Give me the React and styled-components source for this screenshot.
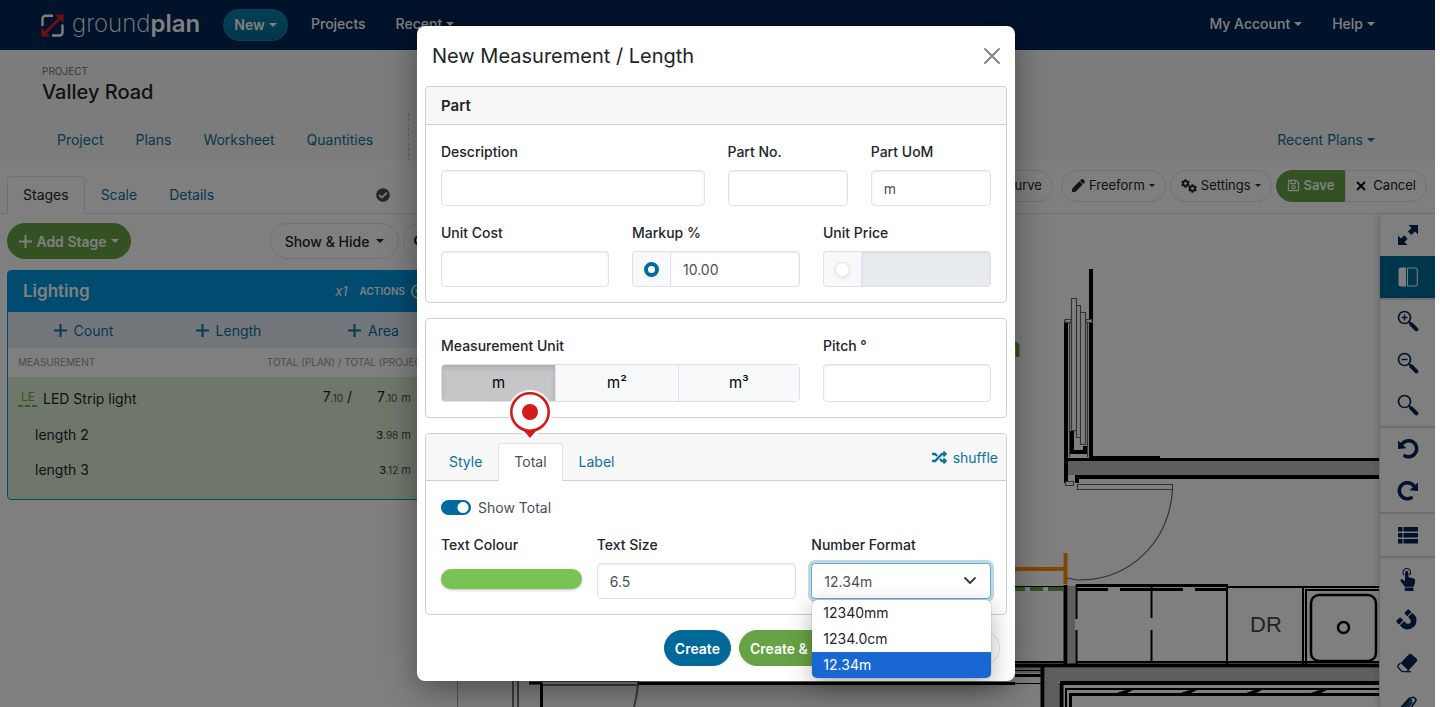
import { useState } from 'react';
import styled, { createGlobalStyle, css } from 'styled-components';
import { FaCheckCircle, FaCog, FaMagnet, FaPen, FaRandom, FaRegSave, FaSearch } from 'react-icons/fa';

const GlobalStyle = createGlobalStyle`
  * { box-sizing: border-box; }
  body {
    margin: 0;
    background: #fff;
    color: #212529;
    font-family: Inter, 'Liberation Sans', sans-serif;
    font-size: 14px;
    line-height: 21px;
  }
  button, input, select { font: inherit; color: inherit; }
  button { cursor: pointer; }
  a { text-decoration: none; }
`;

const Page = styled.div`
  position: relative;
  display: flex;
  flex-direction: column;
  height: 100vh;
  margin-right: 5px;
  overflow: hidden;
`;

const Caret = styled.span`
  display: inline-block;
  margin-left: 4px;
  vertical-align: 3px;
  border-top: 4px solid currentColor;
  border-left: 4px solid transparent;
  border-right: 4px solid transparent;
`;

/* ---- top bar ---- */

const TopBar = styled.header`
  display: flex;
  align-items: center;
  flex: none;
  height: 50px;
  padding: 0 60px 0 41px;
  background: #022456;
  color: #fff;
  font-weight: 500;
`;

const Logo = styled.a`
  display: flex;
  align-items: center;
  gap: 8px;
  width: 182px;
  color: #fff;
  font-size: 24px;
  font-weight: 200;
  line-height: 32px;
  span { padding-bottom: 2px; }
  b { font-weight: 600; }
`;

const NewButton = styled.button`
  height: 32px;
  width: 65px;
  border: 1px solid #0a86b4;
  border-radius: 16px;
  background: linear-gradient(#0c80ac, #006c96);
  color: #fff;
  font-weight: 600;
  padding: 0 0 2px;
`;

const TopLinks = styled.nav`
  display: flex;
  gap: 30px;
  margin-left: ${({ $end }) => ($end ? 'auto' : '23px')};
  padding-bottom: 3px;
  a { color: #fff; }
`;

/* ---- project bar ---- */

const ProjectBar = styled.section`
  flex: none;
  height: 111px;
  padding: 14px 60px 0 42px;
  background: #f8f8f8;
`;

const Eyebrow = styled.div`
  font-size: 10px;
  line-height: 14px;
  text-transform: uppercase;
  color: #6c757d;
`;

const ProjectName = styled.h1`
  margin: 0;
  font-size: 20px;
  line-height: 28px;
  font-weight: 500;
`;

const ProjectNav = styled.nav`
  display: flex;
  align-items: flex-end;
  height: 55px;
  a { height: 48px; padding-top: 16px; color: #0c719f; }
`;

const NavGroup = styled.div`
  display: flex;
  gap: 32px;
  padding: 0 35px 0 15px;
  border-right: 1px dashed #c8c8c8;
`;

const RecentPlans = styled.a`
  margin-left: auto;
`;

/* ---- workspace ---- */

const Workspace = styled.div`
  display: flex;
  flex: 1;
  min-height: 0;
`;

const Sidebar = styled.aside`
  flex: none;
  width: 457px;
  padding-top: 15px;
`;

const SideTabs = styled.nav`
  display: flex;
  align-items: center;
  height: 38px;
  padding: 0 67px 0 7px;
  border-bottom: 1px solid #dee2e6;
  svg { margin-left: auto; color: #495057; }
`;

const SideTab = styled.a`
  height: 38px;
  padding: 7px 15px;
  border: 1px solid transparent;
  border-radius: 4px 4px 0 0;
  color: #0c719f;
  ${({ $active }) => $active && css`
    border-color: #dee2e6 #dee2e6 #fff;
    background: #fff;
    color: #212529;
  `}
`;

const SideActions = styled.div`
  display: flex;
  align-items: center;
  gap: 4px;
  padding: 9px 10px 11px 7px;
`;

const Pill = styled.button`
  display: inline-flex;
  align-items: center;
  justify-content: center;
  gap: 4px;
  height: ${({ $small }) => ($small ? 32 : 36)}px;
  padding: 0 10px;
  border: 1px solid #dee2e6;
  border-radius: 18px;
  background: #fff;
  font-size: ${({ $small }) => ($small ? 13 : 14)}px;
  white-space: nowrap;
  ${Caret} {
    margin-left: 0;
    border-width: ${({ $small }) => ($small ? '3px 3px 0' : '4px 4px 0')};
  }
  ${({ $tone }) => $tone === 'green' && css`
    border-color: #67a244;
    background: #67a244;
    color: #fff;
    font-weight: 600;
  `}
  ${({ $tone }) => $tone === 'blue' && css`
    border-color: #00699a;
    background: #00699a;
    color: #fff;
    font-weight: 600;
  `}
  ${({ $side }) => $side === 'left' && 'border-radius: 16px 0 0 16px;'}
  ${({ $side }) => $side === 'right' && 'border-radius: 0 16px 16px 0; gap: 7px;'}
`;

const AddStage = styled(Pill)`
  width: 124px;
  margin-right: auto;
`;

const ShowHide = styled(Pill)`
  width: 129px;
  gap: 7px;
  font-weight: 500;
`;

const SearchPill = styled(Pill)`
  width: 44px;
  justify-content: flex-start;
`;

const CancelPill = styled(Pill)`
  width: 84px;
`;

const Cogs = styled.span`
  display: flex;
  width: 16px;
  height: 14px;
  svg { flex: none; }
  svg + svg { align-self: flex-end; margin-left: -2px; }
`;

const StageCard = styled.section`
  height: 230px;
  margin: 0 10px 0 7px;
  border: 1px solid #0096e0;
  border-radius: 4px;
  overflow: hidden;
  background: #deeed6;
`;

const StageHead = styled.div`
  display: flex;
  align-items: center;
  gap: 12px;
  height: 41px;
  padding: 0 20px 0 15px;
  background: #0096e0;
  color: #fff;
  h2 { margin: 0 auto 0 0; font-size: 17px; font-weight: 600; }
  i { font-size: 13px; }
  button {
    display: flex;
    align-items: center;
    gap: 6px;
    padding: 0;
    border: 0;
    background: none;
    font-size: 10px;
    font-weight: 600;
  }
`;

const AddRow = styled.div`
  display: grid;
  grid-template-columns: repeat(3, 1fr);
  height: 36px;
  padding-left: 3px;
  background: #e7eef6;
  button {
    display: flex;
    align-items: center;
    justify-content: center;
    gap: 7px;
    border: 0;
    background: none;
    color: #0c719f;
  }
`;

const MeasureTable = styled.table`
  width: 100%;
  border-collapse: collapse;
  th {
    height: 29px;
    padding: 0 14px 0 10px;
    background: #fff;
    color: #999;
    font-size: 10px;
    font-weight: 400;
    text-align: left;
    text-transform: uppercase;
  }
  th + th { text-align: right; }
  td { height: 35px; padding: 0; text-align: right; }
  td:first-child { text-align: left; padding-left: 27px; }
  td:last-child { width: 94px; padding-right: 35px; white-space: nowrap; }
  tbody tr:first-child td { height: 40px; }
  tbody tr:first-child td:first-child { padding-left: 10px; }
  small { font-size: 10px; color: #495057; }
`;

const MeasureName = styled.span`
  display: inline-flex;
  align-items: center;
  gap: 5px;
`;

const Swatch = styled.span`
  width: 20px;
  padding: 0 3px 3px;
  background: repeating-linear-gradient(90deg, #67b345 0 5px, transparent 5px 7px) bottom / 100% 2px no-repeat;
  color: #67b345;
  font-size: 12px;
  line-height: 14px;
`;

const SubValue = styled.span`
  font-size: 11px;
  span { color: #495057; }
`;

/* ---- plan area ---- */

const PlanArea = styled.main`
  display: flex;
  flex: 1;
  flex-direction: column;
  min-width: 0;
`;

const Toolbar = styled.div`
  display: flex;
  align-items: center;
  justify-content: flex-end;
  flex: none;
  gap: 4px;
  height: 53px;
  padding: 0 8px 3px;
  border-bottom: 1px solid #dee2e6;
`;

const ButtonPair = styled.div`
  display: flex;
  margin-right: ${({ $spaced }) => ($spaced ? 4 : 0)}px;
`;

const PlanBody = styled.div`
  display: flex;
  flex: 1;
  min-height: 0;
`;

const Canvas = styled.div`
  display: flex;
  justify-content: flex-end;
  flex: 1;
  min-width: 0;
  overflow: hidden;
  svg { flex: none; }
`;

const ToolColumn = styled.div`
  flex: none;
  width: 56px;
  border-left: 1px solid #d8d8d8;
  box-shadow: -2px 0 6px rgba(0, 0, 0, 0.12);
  background: #fff;
`;

const ToolGroup = styled.div`
  border-bottom: 2px solid #dcdcdc;
`;

const Tool = styled.button`
  display: flex;
  align-items: center;
  justify-content: center;
  width: 100%;
  height: 42px;
  padding: 0;
  border: 0;
  background: ${({ $active }) => ($active ? '#006c96' : 'none')};
  color: ${({ $active }) => ($active ? '#fff' : '#022456')};
`;

const TiltedMagnet = styled(FaMagnet)`
  transform: rotate(-45deg);
`;

/* ---- dialog ---- */

const Backdrop = styled.div`
  position: absolute;
  inset: 0;
  padding: 26px 19px 0 16px;
  background: rgba(0, 0, 0, 0.5);
`;

const Dialog = styled.form`
  display: flex;
  flex-direction: column;
  gap: 15px;
  max-width: 598px;
  margin: 0 auto;
  padding: 0 8px 15px;
  border-radius: 8px;
  background: #fff;
  box-shadow: 0 8px 32px rgba(0, 0, 0, 0.4);
`;

const DialogHead = styled.div`
  display: flex;
  align-items: center;
  justify-content: space-between;
  height: 60px;
  margin-bottom: -15px;
  padding: 0 7px;
  h2 { margin: 0; font-size: 20px; font-weight: 400; line-height: 30px; }
  button {
    display: flex;
    padding: 0;
    border: 0;
    background: none;
    color: #7f7f7f;
  }
`;

const Card = styled.fieldset`
  min-width: 0;
  margin: 0;
  padding: 0;
  border: 1px solid #cfcfcf;
  border-radius: 4px;
`;

const CardHead = styled.div`
  display: flex;
  padding: 8px 15px;
  border-bottom: 1px solid #cfcfcf;
  border-radius: 4px 4px 0 0;
  background: #f7f7f7;
  h3 { margin: 0; font-size: 15px; font-weight: 600; line-height: 21px; }
`;

const CardBody = styled.div`
  display: grid;
  grid-template-columns: ${({ $cols = 'repeat(12, 1fr)' }) => $cols};
  column-gap: ${({ $gap = 23 }) => $gap}px;
  row-gap: 16px;
  padding: 16px 15px 15px;
`;

const Field = styled.div`
  grid-column: span ${({ $span = 1 }) => $span};
  position: relative;
  min-width: 0;
`;

const Label = styled.label`
  display: block;
  margin-bottom: 8px;
  font-weight: 500;
`;

const boxed = css`
  width: 100%;
  height: ${({ $tall }) => ($tall ? 38 : 36)}px;
  padding: 0 12px;
  border: 1px solid #dee2e6;
  border-radius: 4px;
  background: #fff;
  box-shadow: inset 0 1px 2px rgba(0, 0, 0, 0.08);
  color: #495057;
  outline: 0;
`;

const Input = styled.input`
  ${boxed}
  &:disabled { background: #e7eaee; }
`;

const InputGroup = styled.div`
  display: flex;
  ${Input} { flex: 1; min-width: 0; border-radius: 0 4px 4px 0; }
`;

const RadioCell = styled.span`
  display: flex;
  align-items: center;
  justify-content: center;
  flex: none;
  width: 38px;
  border: 1px solid #dee2e6;
  border-right: 0;
  border-radius: 4px 0 0 4px;
  background: #f8f9fb;
  input {
    appearance: none;
    width: 15px;
    height: 15px;
    margin: 0;
    border: 1px solid #dee2e6;
    border-radius: 50%;
    background: #fff;
    box-shadow: 0 2px 4px rgba(0, 0, 0, 0.08);
  }
  input:checked { border: 4px solid #006c9d; }
`;

const UnitGroup = styled.div`
  display: grid;
  grid-template-columns: 113fr 122fr 121fr;
  height: 38px;
  border: 1px solid #dee2e6;
  border-radius: 4px;
  overflow: hidden;
`;

const UnitButton = styled.button`
  padding: 0 0 2px;
  border: 0;
  background: #f8f9fb;
  color: #000;
  font-size: 15px;
  & + & { border-left: 1px solid #dee2e6; }
  ${({ $active }) => $active && css`
    background: #c4c6c8;
    box-shadow: inset 0 3px 5px rgba(0, 0, 0, 0.13);
  `}
`;

const TabHead = styled(CardHead)`
  align-items: flex-end;
  height: 47px;
  padding: 0 8px 0 7px;
`;

const Tab = styled.button`
  position: relative;
  height: 38px;
  margin-bottom: -1px;
  padding: 0 15px 2px;
  border: 1px solid transparent;
  border-bottom: 0;
  border-radius: 4px 4px 0 0;
  background: none;
  color: #0c719f;
  ${({ $active }) => $active && css`
    border-color: #dee2e6;
    background: #fff;
    color: #495057;
  `}
`;

const Pin = styled.svg`
  position: absolute;
  left: 50%;
  bottom: 100%;
  margin: 0 0 2px -22px;
`;

const Shuffle = styled.button`
  display: flex;
  align-items: center;
  gap: 6px;
  margin: 0 0 12px auto;
  padding: 0;
  border: 0;
  background: none;
  color: #0c719f;
`;

const SwitchRow = styled.label`
  grid-column: 1 / -1;
  display: flex;
  align-items: center;
  gap: 7px;
  color: #495057;
  input {
    appearance: none;
    width: 30px;
    height: 15px;
    margin: 0;
    border-radius: 8px;
    background: radial-gradient(circle at 22px 50%, #fff 5px, #006c9d 6px);
  }
`;

const ColourButton = styled.button`
  display: block;
  width: 100%;
  height: 20px;
  margin-top: 14px;
  border: 0;
  border-radius: 10px;
  background: #79c253;
  box-shadow: 0 1px 3px rgba(0, 0, 0, 0.25);
`;

const Select = styled.select`
  ${boxed}
  appearance: none;
  border-color: #6cabc9;
  box-shadow: 0 0 0 3px #bcd9e7;
`;

const SelectChevron = styled.svg`
  position: absolute;
  right: 14px;
  bottom: 13px;
  pointer-events: none;
`;

const Options = styled.ul`
  position: absolute;
  top: 100%;
  left: 1px;
  right: 0;
  margin: 1px 0 0;
  padding: 0;
  border-radius: 5px;
  background: #fff;
  box-shadow: 0 0 1px rgba(0, 0, 0, 0.6), 0 8px 24px rgba(0, 0, 0, 0.3);
  list-style: none;
  overflow: hidden;
`;

const Option = styled.li`
  padding: 0 11px;
  line-height: 26px;
  ${({ $active }) => $active && 'background: #1967d2; color: #fff;'}
`;

const DialogFoot = styled.div`
  display: flex;
  justify-content: flex-end;
  gap: 8px;
  padding-right: 7px;
`;

const formats = ['12340mm', '1234.0cm', '12.34m'];

function Plus() {
  return (
    <svg width="13" height="13" viewBox="0 0 13 13" stroke="currentColor" strokeWidth="2">
      <path d="M6.500 0v13M0 6.500h13" />
    </svg>
  );
}

function ZoomIcon({ sign }) {
  return (
    <svg width="22" height="22" viewBox="0 0 22 22" fill="none" stroke="currentColor">
      <circle cx="7.5" cy="7.5" r="6" strokeWidth="1.7" />
      <path d="M11.6 11.6l2.4 2.4" strokeWidth="2" />
      <path d="M14.4 14.4l5 5" strokeWidth="4" strokeLinecap="round" />
      {sign && <path d="M4.5 7.5h6" strokeWidth="1.4" />}
      {sign === 'in' && <path d="M7.5 4.5v6" strokeWidth="1.4" />}
    </svg>
  );
}

function TurnIcon({ flip }) {
  return (
    <svg width="22" height="22" viewBox="0 0 22 22">
      <g transform={flip ? 'translate(22 0) scale(-1 1)' : undefined}>
        <path d="M4.5 6.600C7 2.800 12 1.600 15.800 3.800c3.900 2.300 5 7.500 2.600 11.200-2.200 3.400-6.800 4.700-10.600 2.900" fill="none" stroke="currentColor" strokeWidth="3.600" strokeLinecap="round" />
        <path d="M1 2.500v8.500l8.500-.8z" fill="currentColor" />
      </g>
    </svg>
  );
}

function FloorPlan() {
  return (
    <svg width="922" height="493" viewBox="457 214 922 493" fill="none" stroke="#000">
      <g fill="#bcbcbc" stroke="none">
        <path d="M1068 461h311v14h-311zM1068 586h7v78h-7zM1045 668h334v13h-320v26h-14zM1015 667h27v6h-27z" />
      </g>
      <text x="1021" y="357" textAnchor="end" fontSize="26" fontWeight="700" fill="#67a244" stroke="none">7.10m</text>
      {/* sliding door pocket */}
      <path strokeWidth="4" d="M1091 269V460M1066 321V483M1072 431v21h13v-6M1076 477H1379M1077 475v8" />
      <g stroke="#666" fill="#fff" strokeWidth="1.200">
        <path d="M1069.500 323v134M1087.500 323v134" />
        <path d="M1065 319.500h6v3h-6zM1086 319.500h6v3h-6zM1071.500 298.500h5v132h-5zM1076.500 305.500h4v132h-4zM1080.500 312.500h5v132h-5z" />
        <path d="M1065.500 481.500h8v4h-8zM1077.500 484.500h95v5h-95z" />
        <path fill="none" d="M1172.500 490C1169 540 1132 581 1077 580l-10-2" />
      </g>
      <path strokeWidth="3" d="M1064 459.500H1379M1091 457.500h69" />
      {/* bench and sink */}
      <path strokeWidth="4" d="M1065.500 585v79M1015 665.500H1379M1042.500 665v42M1060 683H1379M1061.500 683v24" />
      <path strokeWidth="3" d="M1076 585.500h152M1077 589.500h31M1120 589.500h63M1195 589.500h32M1015 675.500h27M1070 694.500H1379M1070.500 693v14" />
      <path strokeWidth="2" d="M1076.500 585v34M1076.500 630v34M1151.500 585v33M1151.500 630v33M1227 585v79M1228 587H1379M1303 587v77M1306 589v75M1306 590H1379M1076 662H1379M1015 662h50M1065 689H1379M1066 689v18" />
      <path strokeWidth="1" d="M1015 586.500h50M1015 670.500h27M1015 683.500h27" />
      <path fill="#000" stroke="none" d="M1117 693l14-5h6l-10 5zM1181 693l14-5h6l-10 5zM1246 693l14-5h6l-10 5zM1311 693l14-5h6l-10 5z" />
      <rect x="1311" y="595" width="65" height="66" rx="8" strokeWidth="2.500" />
      <circle cx="1343.500" cy="627.500" r="5.500" strokeWidth="2.500" />
      <text x="1250" y="632" fontSize="22" fontFamily="Liberation Sans, sans-serif" fill="#444" stroke="none">DR</text>
      {/* lower left wall */}
      <path stroke="#aaa" d="M457.500 214v493" />
      <path stroke="#777" strokeWidth="2" d="M513 660v47M518 660v47M542 681h96M542 685h96M638 681c0 10-2 18-4 26" />
      <path strokeWidth="3" d="M529 683h13M541.500 683v24M638 683.500h377" />
      {/* measured runs */}
      <path stroke="#67a244" strokeWidth="4" d="M1015 589h10M1030 589h13M1048 589h15" />
      <path stroke="#ff9000" strokeWidth="4" d="M1015 569h50M1065.500 553v31" />
    </svg>
  );
}

function Header() {
  return (
    <TopBar>
      <Logo href="#">
        <svg width="23" height="23" viewBox="0 0 23 23" fill="none">
          <path d="M12 1.800H4.500a3 3 0 0 0-3 3V12M21.500 10.500v8a3 3 0 0 1-3 3H11" stroke="#fff" strokeWidth="2.400" />
          <path d="M4 19L19 4" stroke="#e02020" strokeWidth="2.600" />
          <path d="M14 .5h8.500V9zM.5 14v8.500H9z" fill="#e02020" />
        </svg>
        <span>ground<b>plan</b></span>
      </Logo>
      <NewButton>New<Caret /></NewButton>
      <TopLinks>
        <a href="#projects">Projects</a>
        <a href="#recent">Recent<Caret /></a>
      </TopLinks>
      <TopLinks $end>
        <a href="#account">My Account<Caret /></a>
        <a href="#help">Help<Caret /></a>
      </TopLinks>
    </TopBar>
  );
}

function StagePanel() {
  return (
    <Sidebar>
      <SideTabs>
        <SideTab href="#stages" $active>Stages</SideTab>
        <SideTab href="#scale">Scale</SideTab>
        <SideTab href="#details">Details</SideTab>
        <FaCheckCircle size={14} />
      </SideTabs>
      <SideActions>
        <AddStage $tone="green"><Plus />Add Stage<Caret /></AddStage>
        <ShowHide>Show &amp; Hide<Caret /></ShowHide>
        <SearchPill aria-label="Search"><FaSearch size={13} /></SearchPill>
      </SideActions>
      <StageCard>
        <StageHead>
          <h2>Lighting</h2>
          <i>x1</i>
          <button>
            ACTIONS
            <svg width="15" height="15" viewBox="0 0 15 15">
              <circle cx="7.5" cy="7.5" r="6.700" fill="none" stroke="#fff" strokeWidth="1.500" />
              <path d="M4 5.500h7L7.500 11z" fill="#fff" />
            </svg>
          </button>
        </StageHead>
        <AddRow>
          <button><Plus />Count</button>
          <button><Plus />Length</button>
          <button><Plus />Area</button>
        </AddRow>
        <MeasureTable>
          <thead>
            <tr><th>Measurement</th><th colSpan={2}>Total (Plan) / Total (Project)</th></tr>
          </thead>
          <tbody>
            <tr>
              <td><MeasureName><Swatch>LE</Swatch>LED Strip light</MeasureName></td>
              <td>7<small>.10</small> /</td>
              <td>7<small>.10</small> <SubValue><span>m</span></SubValue></td>
            </tr>
            <tr>
              <td>length 2</td>
              <td />
              <td><SubValue>3<small>.98</small> <span>m</span></SubValue></td>
            </tr>
            <tr>
              <td>length 3</td>
              <td />
              <td><SubValue>3<small>.12</small> <span>m</span></SubValue></td>
            </tr>
          </tbody>
        </MeasureTable>
      </StageCard>
    </Sidebar>
  );
}

function Tools() {
  return (
    <ToolColumn>
      <ToolGroup>
        <Tool aria-label="Full screen">
          <svg width="20" height="20" viewBox="0 0 20 20" fill="currentColor">
            <path d="M10.500 0H20v9.500l-3-3-3.600 3.600-3.500-3.500L13.500 3zM9.500 20H0v-9.500l3 3 3.200-3.200 3.500 3.500L6.500 17z" />
          </svg>
        </Tool>
        <Tool aria-label="Panels" $active>
          <svg width="20" height="20" viewBox="0 0 20 20">
            <path d="M3 .5h5v19H3A2.500 2.500 0 0 1 .5 17V3A2.500 2.500 0 0 1 3 .5z" fill="#fff" />
            <path d="M9.500 1h8A1.800 1.800 0 0 1 19.300 3v14a1.800 1.800 0 0 1-1.800 2h-8z" fill="none" stroke="#fff" />
          </svg>
        </Tool>
      </ToolGroup>
      <ToolGroup>
        <Tool aria-label="Zoom in"><ZoomIcon sign="in" /></Tool>
        <Tool aria-label="Zoom out"><ZoomIcon sign="out" /></Tool>
        <Tool aria-label="Zoom to fit"><ZoomIcon /></Tool>
      </ToolGroup>
      <ToolGroup>
        <Tool aria-label="Undo"><TurnIcon /></Tool>
        <Tool aria-label="Redo"><TurnIcon flip /></Tool>
      </ToolGroup>
      <ToolGroup>
        <Tool aria-label="List">
          <svg width="20" height="18" viewBox="0 0 20 18" fill="currentColor">
            <path d="M0 1h4.500v4.500H0zM5.500 1H20v4.500H5.500zM0 7h4.500v4.500H0zM5.500 7H20v4.500H5.500zM0 13h4.500v4.500H0zM5.500 13H20v4.500H5.500z" />
          </svg>
        </Tool>
      </ToolGroup>
      <Tool aria-label="Select">
        <svg width="16" height="23" viewBox="0 0 16 23">
          <path d="M4 7A3.800 3.800 0 1 1 9.500 7" fill="none" stroke="currentColor" strokeWidth="1.200" />
          <path d="M5 4.500a1.700 1.700 0 0 1 3.400 0V9.200l4.800 1c1.200.3 1.800 1 1.800 2.200V15l-1.500 3.800H4.800L.8 13.500c-1-1.500.6-3 2-1.900L5 13.300z" fill="currentColor" />
          <path d="M4.800 19.500h8.700V23H4.800z" fill="currentColor" />
        </svg>
      </Tool>
      <Tool aria-label="Snap"><TiltedMagnet size={18} /></Tool>
      <Tool aria-label="Erase">
        <svg width="21" height="20" viewBox="0 0 21 20">
          <path d="M3.500 10L12 1.300c.8-.8 1.800-.8 2.600-.1l5 4.600c.8.8.8 1.800.1 2.600L11.500 17.500z" fill="currentColor" />
          <path d="M3.500 10L1.200 12.500c-.6.6-.6 1.400 0 2L4.500 18c.5.500 1 .7 1.600.7H10l1.500-1.700" fill="none" stroke="currentColor" strokeWidth="1.200" />
          <path d="M10 18.700h4" stroke="currentColor" strokeWidth="1.200" />
        </svg>
      </Tool>
      <Tool aria-label="Attach">
        <svg width="18" height="20" viewBox="0 0 18 20" fill="none" stroke="currentColor" strokeWidth="1.600" strokeLinecap="round">
          <path d="M13 7.500l-7 8c-1.700 1.900-4.300-.3-2.700-2.200l8.400-9.800c2.700-3 6.900.5 4.400 3.600L8.300 17c-3.400 3.700-8.900-.8-5.900-4.900L10.500 3" />
          <path d="M6 12.500l6.500-7.200" />
        </svg>
      </Tool>
    </ToolColumn>
  );
}

function MeasurementDialog() {
  const [unit, setUnit] = useState('m');
  const [format, setFormat] = useState('12.34m');

  return (
    <Dialog role="dialog" aria-labelledby="dialog-title">
      <DialogHead>
        <h2 id="dialog-title">New Measurement / Length</h2>
        <button type="button" aria-label="Close">
          <svg width="16" height="16" viewBox="0 0 16 16" stroke="currentColor" strokeWidth="1.800" strokeLinecap="round">
            <path d="M1 1l14 14M15 1L1 15" />
          </svg>
        </button>
      </DialogHead>

      <Card>
        <CardHead><h3>Part</h3></CardHead>
        <CardBody>
          <Field $span={6}>
            <Label htmlFor="description">Description</Label>
            <Input id="description" />
          </Field>
          <Field $span={3}>
            <Label htmlFor="part-no">Part No.</Label>
            <Input id="part-no" />
          </Field>
          <Field $span={3}>
            <Label htmlFor="part-uom">Part UoM</Label>
            <Input id="part-uom" defaultValue="m" />
          </Field>
          <Field $span={4}>
            <Label htmlFor="unit-cost">Unit Cost</Label>
            <Input id="unit-cost" />
          </Field>
          <Field $span={4}>
            <Label htmlFor="markup">Markup %</Label>
            <InputGroup>
              <RadioCell><input type="radio" name="pricing" aria-label="Use markup" defaultChecked /></RadioCell>
              <Input id="markup" defaultValue="10.00" />
            </InputGroup>
          </Field>
          <Field $span={4}>
            <Label htmlFor="unit-price">Unit Price</Label>
            <InputGroup>
              <RadioCell><input type="radio" name="pricing" aria-label="Use unit price" /></RadioCell>
              <Input id="unit-price" disabled />
            </InputGroup>
          </Field>
        </CardBody>
      </Card>

      <Card>
        <CardBody>
          <Field $span={8}>
            <Label as="div">Measurement Unit</Label>
            <UnitGroup>
              {['m', 'm²', 'm³'].map((u) => (
                <UnitButton key={u} type="button" $active={u === unit} onClick={() => setUnit(u)}>{u}</UnitButton>
              ))}
            </UnitGroup>
          </Field>
          <Field $span={4}>
            <Label htmlFor="pitch">Pitch °</Label>
            <Input id="pitch" $tall />
          </Field>
        </CardBody>
      </Card>

      <Card>
        <TabHead>
          <Tab type="button">Style</Tab>
          <Tab type="button" $active>
            Total
            <Pin width="44" height="54" viewBox="0 0 44 54">
              <path d="M22 54l-9-10h18z" fill="#fff" />
              <circle cx="22" cy="24" r="22" fill="#fff" />
              <path d="M22 50l-6-7h12z" fill="#d41a1a" />
              <circle cx="22" cy="24" r="18.700" fill="#fff" stroke="#d41a1a" strokeWidth="2.600" />
              <circle cx="22" cy="24" r="8" fill="#d41a1a" />
            </Pin>
          </Tab>
          <Tab type="button">Label</Tab>
          <Shuffle type="button"><FaRandom size={15} />shuffle</Shuffle>
        </TabHead>
        <CardBody $cols="141fr 200fr 180fr" $gap={15}>
          <SwitchRow>
            <input type="checkbox" role="switch" defaultChecked />
            Show Total
          </SwitchRow>
          <Field>
            <Label htmlFor="colour">Text Colour</Label>
            <ColourButton id="colour" type="button" aria-label="Text Colour" />
          </Field>
          <Field>
            <Label htmlFor="text-size">Text Size</Label>
            <Input id="text-size" defaultValue="6.5" />
          </Field>
          <Field>
            <Label htmlFor="format">Number Format</Label>
            <Select id="format" value={format} onChange={(e) => setFormat(e.target.value)}>
              {formats.map((f) => <option key={f}>{f}</option>)}
            </Select>
            <SelectChevron width="14" height="10" viewBox="0 0 14 10" fill="none" stroke="#343a40" strokeWidth="1.800">
              <path d="M2 2l5 5 5-5" strokeLinecap="round" strokeLinejoin="round" />
            </SelectChevron>
            <Options>
              {formats.map((f) => (
                <Option key={f} $active={f === format} onClick={() => setFormat(f)}>{f}</Option>
              ))}
            </Options>
          </Field>
        </CardBody>
      </Card>

      <DialogFoot>
        <Pill type="button" $tone="blue">Create</Pill>
        <Pill type="button" $tone="green">Create &amp; Add Another</Pill>
        <CancelPill type="button">Cancel</CancelPill>
      </DialogFoot>
    </Dialog>
  );
}

function App() {
  return (
    <Page>
      <GlobalStyle />
      <Header />
      <ProjectBar>
        <Eyebrow>Project</Eyebrow>
        <ProjectName>Valley Road</ProjectName>
        <ProjectNav>
          <NavGroup>
            <a href="#project">Project</a>
            <a href="#plans">Plans</a>
            <a href="#worksheet">Worksheet</a>
            <a href="#quantities">Quantities</a>
          </NavGroup>
          <RecentPlans href="#recent-plans">Recent Plans<Caret /></RecentPlans>
        </ProjectNav>
      </ProjectBar>
      <Workspace>
        <StagePanel />
        <PlanArea>
          <Toolbar>
            <ButtonPair $spaced><Pill $small>Curve</Pill></ButtonPair>
            <Pill $small><FaPen size={13} />Freeform<Caret /></Pill>
            <Pill $small><Cogs><FaCog size={9} /><FaCog size={9} /></Cogs>Settings<Caret /></Pill>
            <ButtonPair>
              <Pill $small $tone="green" $side="left"><FaRegSave size={13} />Save</Pill>
              <Pill $small $side="right">
                <svg width="10" height="10" viewBox="0 0 10 10" stroke="#000" strokeWidth="1.800"><path d="M1 1l8 8M9 1L1 9" /></svg>
                Cancel
              </Pill>
            </ButtonPair>
          </Toolbar>
          <PlanBody>
            <Canvas><FloorPlan /></Canvas>
            <Tools />
          </PlanBody>
        </PlanArea>
      </Workspace>
      <Backdrop>
        <MeasurementDialog />
      </Backdrop>
    </Page>
  );
}

export default App;
